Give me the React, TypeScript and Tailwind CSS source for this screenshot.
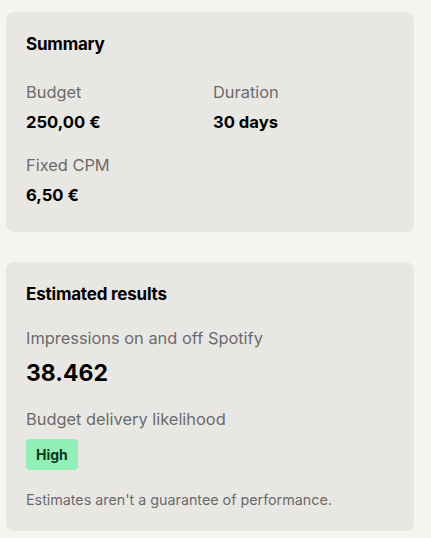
import React from "react";

export default function App() {
  return (
    <div className="min-h-[538px] w-[431px] bg-[#f5f4f0] pl-[6px] pr-[17px] pt-[12px] text-black" style={{ fontFamily: "Inter, 'Noto Sans', sans-serif" }}>
      <div className="flex flex-col gap-[30px]">
        <section className="rounded-[8px] bg-[#e9e7e4] px-[20px] pt-[20px] pb-[25px]">
          <h2 className="text-[17px] leading-[24px] font-bold tracking-[-0.2px]">Summary</h2>
          <div className="mt-[24px] grid grid-cols-2 gap-x-[6px] gap-y-[19px]">
            <div>
              <div className="text-[16.4px] leading-[24px] text-[#6b6b6b]">Budget</div>
              <div className="mt-[6px] text-[16.6px] leading-[24px] font-bold">250,00 €</div>
            </div>
            <div>
              <div className="text-[16.4px] leading-[24px] text-[#6b6b6b]">Duration</div>
              <div className="mt-[6px] text-[16.6px] leading-[24px] font-bold">30 days</div>
            </div>
            <div>
              <div className="text-[16.4px] leading-[24px] text-[#6b6b6b]">Fixed CPM</div>
              <div className="mt-[6px] text-[16.6px] leading-[24px] font-bold">6,50 €</div>
            </div>
          </div>
        </section>
        <section className="rounded-[8px] bg-[#e9e7e4] px-[20px] pt-[20px] pb-[21px]">
          <h2 className="text-[17px] leading-[24px] font-bold tracking-[-0.2px]">Estimated results</h2>
          <div className="mt-[20px] text-[16.4px] leading-[24px] text-[#6b6b6b]">Impressions on and off Spotify</div>
          <div className="mt-[7px] text-[23px] leading-[32px] font-bold">38.462</div>
          <div className="mt-[18px] text-[16.4px] leading-[24px] text-[#6b6b6b]">Budget delivery likelihood</div>
          <div className="mt-[8px] flex">
            <span className="rounded-[4px] bg-[#92efb7] px-[10px] py-[5px] text-[14px] leading-[21px] font-bold text-[#0c3a1f]">High</span>
          </div>
          <p className="mt-[20px] text-[14.3px] leading-[20px] text-[#6b6b6b]">Estimates aren't a guarantee of performance.</p>
        </section>
      </div>
    </div>
  );
}
